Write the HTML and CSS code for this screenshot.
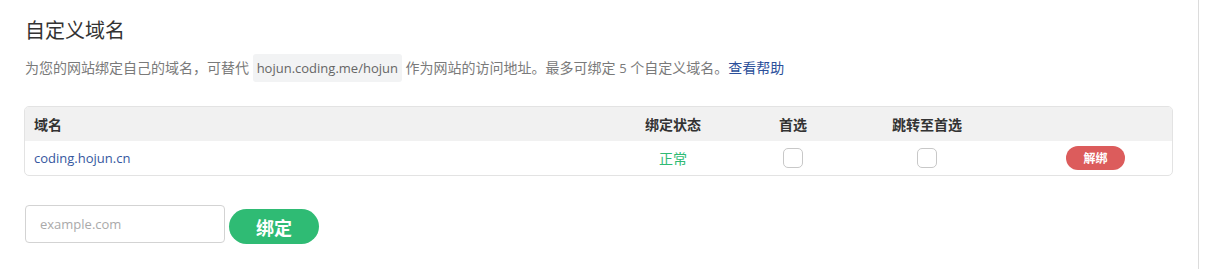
FILE: index.html
```html
<!DOCTYPE html>
<html lang="zh-CN">
<head>
<meta charset="utf-8">
<title>自定义域名</title>
<link rel="stylesheet" href="styles.css">
</head>
<body>
<div class="page">
  <h2 class="title">自定义域名</h2>
  <p class="desc">为您的网站绑定自己的域名，可替代 <code class="code">hojun.coding.me/hojun</code> 作为网站的访问地址。最多可绑定 <span class="num">5</span> 个自定义域名。<a class="help" href="#">查看帮助</a></p>
  <div class="table">
    <div class="row head">
      <div class="cell name">域名</div>
      <div class="cell center">绑定状态</div>
      <div class="cell center">首选</div>
      <div class="cell center">跳转至首选</div>
      <div class="cell"></div>
    </div>
    <div class="row">
      <div class="cell name domain">coding.hojun.cn</div>
      <div class="cell center ok">正常</div>
      <div class="cell center"><span class="check"></span></div>
      <div class="cell center"><span class="check"></span></div>
      <div class="cell action"><button class="unbind">解绑</button></div>
    </div>
  </div>
  <div class="form">
    <input class="input" type="text" placeholder="example.com">
    <button class="bind">绑定</button>
  </div>
</div>
</body>
</html>
```
FILE: styles.css
```css
html, body {
  margin: 0;
  padding: 0;
  background: #fff;
}
body {
  font-family: "Open Sans", "Noto Sans CJK SC", sans-serif;
  color: #333;
}
.page {
  box-sizing: border-box;
  width: 1199px;
  height: 269px;
  border-right: 1px solid #dcdcdc;
  padding: 17px 0 0 25px;
}
.title {
  margin: 0;
  font-size: 20px;
  font-weight: 400;
  line-height: 28px;
  color: #333;
}
.desc {
  margin: 10px 0 0;
  font-size: 14px;
  line-height: 25px;
  color: #7a7a7a;
}
.num {
  font-size: 13px;
}
.code {
  font-family: "Open Sans", "Noto Sans CJK SC", sans-serif;
  font-size: 13px;
  background: #f2f3f4;
  border-radius: 3px;
  padding: 5px 4px;
  color: #666;
}
.help {
  color: #2b4f9a;
  text-decoration: none;
}
.table {
  margin-top: 25px;
  width: 1149px;
  margin-left: -1px;
  box-sizing: border-box;
  border: 1px solid #e3e3e3;
  border-radius: 5px;
  overflow: hidden;
}
.row {
  display: grid;
  grid-template-columns: 588px 120px 120px 148px 171px;
  height: 34px;
  align-items: center;
  font-size: 14px;
}
.row.head {
  background: #f1f1f1;
  font-weight: 700;
  color: #333;
}
.cell.name {
  padding-left: 9px;
}
.cell.center {
  display: flex;
  justify-content: center;
}
.domain {
  font-size: 13px;
  color: #3657a0;
}
.ok {
  color: #2fbb74;
}
.check {
  display: block;
  width: 18px;
  height: 18px;
  border: 1px solid #c8c8c8;
  border-radius: 5px;
  background: #fff;
}
.action {
  padding-left: 65px;
}
.unbind {
  width: 59px;
  height: 24px;
  border: none;
  border-radius: 12px;
  background: #dc5c5c;
  color: #fff;
  font-family: "Open Sans", "Noto Sans CJK SC", sans-serif;
  font-size: 12px;
  font-weight: 700;
  padding: 0;
}
.form {
  margin-top: 29px;
  display: flex;
  align-items: flex-end;
  gap: 4px;
}
.input {
  box-sizing: border-box;
  width: 200px;
  height: 38px;
  border: 1px solid #d3d3d3;
  border-radius: 4px;
  padding: 0 14px;
  font-family: "Open Sans", "Noto Sans CJK SC", sans-serif;
  font-size: 13px;
  color: #333;
  outline: none;
}
.input::placeholder {
  color: #aaa;
}
.bind {
  width: 90px;
  height: 35px;
  margin-bottom: -1px;
  border: none;
  border-radius: 18px;
  background: #2fbb74;
  color: #fff;
  font-family: "Open Sans", "Noto Sans CJK SC", sans-serif;
  font-size: 18px;
  font-weight: 700;
  padding: 0;
}
```
